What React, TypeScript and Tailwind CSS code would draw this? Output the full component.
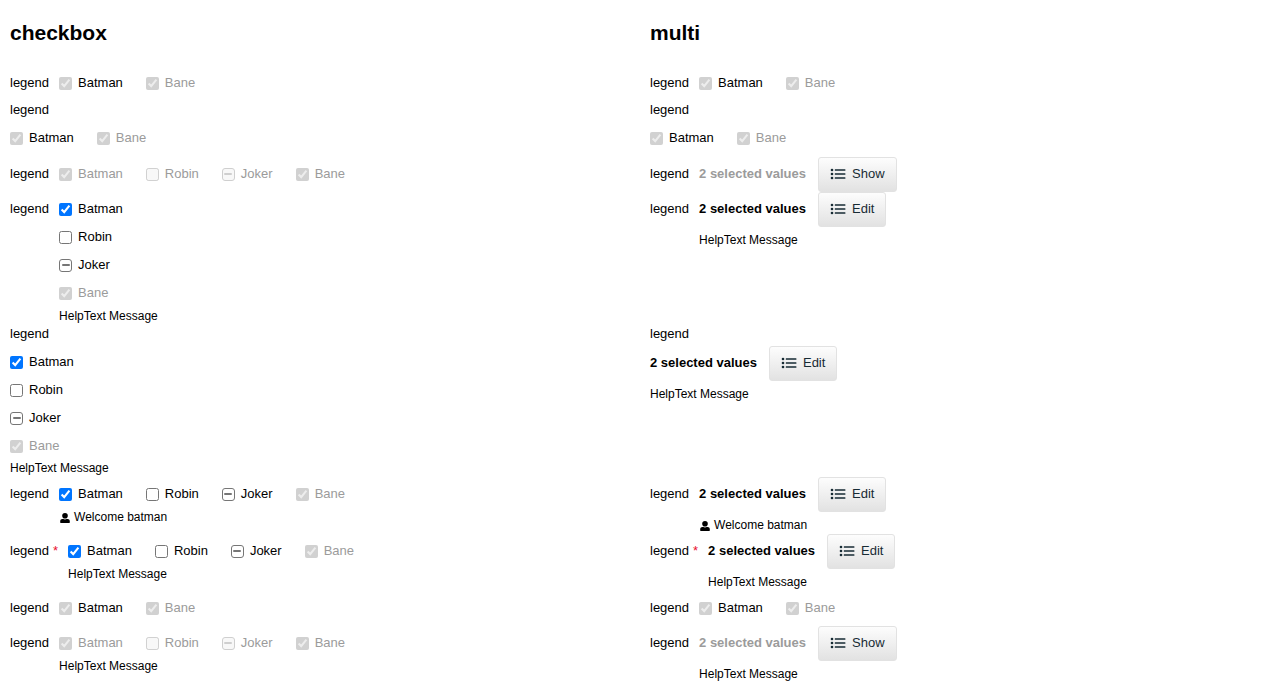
import { useEffect, useId, useRef, type ReactNode } from 'react';

type OptionState = {
  label: string;
  checked?: boolean;
  mixed?: boolean;
  disabled?: boolean;
  muted?: boolean;
};

type Field = {
  options?: OptionState[];
  summary?: 'Show' | 'Edit';
  stacked?: boolean;
  vertical?: boolean;
  required?: boolean;
  help?: 'text' | 'user';
};

const readOnlyOptions: OptionState[] = [
  { label: 'Batman', checked: true, disabled: true },
  { label: 'Bane', checked: true, disabled: true, muted: true },
];

const disabledOptions: OptionState[] = [
  { label: 'Batman', checked: true, disabled: true, muted: true },
  { label: 'Robin', disabled: true, muted: true },
  { label: 'Joker', mixed: true, disabled: true, muted: true },
  { label: 'Bane', checked: true, disabled: true, muted: true },
];

const editableOptions: OptionState[] = [
  { label: 'Batman', checked: true },
  { label: 'Robin' },
  { label: 'Joker', mixed: true },
  { label: 'Bane', checked: true, disabled: true, muted: true },
];

const rows: [Field, Field][] = [
  [{ options: readOnlyOptions }, { options: readOnlyOptions }],
  [
    { options: readOnlyOptions, stacked: true },
    { options: readOnlyOptions, stacked: true },
  ],
  [{ options: disabledOptions }, { summary: 'Show' }],
  [
    { options: editableOptions, vertical: true, help: 'text' },
    { summary: 'Edit', help: 'text' },
  ],
  [
    { options: editableOptions, vertical: true, stacked: true, help: 'text' },
    { summary: 'Edit', stacked: true, help: 'text' },
  ],
  [
    { options: editableOptions, help: 'user' },
    { summary: 'Edit', help: 'user' },
  ],
  [
    { options: editableOptions, required: true, help: 'text' },
    { summary: 'Edit', required: true, help: 'text' },
  ],
  [{ options: readOnlyOptions }, { options: readOnlyOptions }],
  [
    { options: disabledOptions, help: 'text' },
    { summary: 'Show', help: 'text' },
  ],
];

function ListIcon() {
  return (
    <svg className="size-4" viewBox="0 0 16 16" fill="currentColor" aria-hidden="true">
      <circle cx="2" cy="4" r="1.3" />
      <circle cx="2" cy="8" r="1.3" />
      <circle cx="2" cy="12" r="1.3" />
      <rect x="4.8" y="3.2" width="10.6" height="1.6" rx="0.4" />
      <rect x="4.8" y="7.2" width="10.6" height="1.6" rx="0.4" />
      <rect x="4.8" y="11.2" width="10.6" height="1.6" rx="0.4" />
    </svg>
  );
}

function UserIcon() {
  return (
    <svg className="mt-px size-3" viewBox="0 0 12 12" fill="currentColor" aria-hidden="true">
      <circle cx="6" cy="3.8" r="2.8" />
      <path d="M1.2 10.6V9.2C1.2 7.9 2.2 7 3.4 7h.9c1 .5 2.4 .5 3.4 0h.9c1.2 0 2.2.9 2.2 2.2v1.4c0 .3-.2.4-.5.4H1.7c-.3 0-.5-.1-.5-.4z" />
    </svg>
  );
}

const mixedBox =
  "grid appearance-none place-items-center rounded-[3px] border border-[#767676] bg-white before:h-0.5 before:w-2 before:rounded-full before:bg-[#767676] before:content-[''] disabled:border-[#cfcfcf] disabled:bg-[#f8f8f8] disabled:before:bg-[#cfcfcf]";

function Option({ label, checked, mixed, disabled, muted }: OptionState) {
  const ref = useRef<HTMLInputElement>(null);
  useEffect(() => {
    if (ref.current) ref.current.indeterminate = Boolean(mixed);
  }, [mixed]);
  return (
    <label className={`flex h-7 items-center gap-1.5 ${muted ? 'text-[#9b9b9b]' : ''}`}>
      <input
        ref={ref}
        type="checkbox"
        defaultChecked={checked}
        disabled={disabled}
        className={`size-[13px] ${mixed ? mixedBox : ''}`}
      />
      {label}
    </label>
  );
}

function Help({ kind }: { kind: 'text' | 'user' }) {
  return (
    <p className="flex items-center gap-[3px] pb-px text-[12px] leading-4">
      {kind === 'user' ? (
        <>
          <UserIcon />
          Welcome batman
        </>
      ) : (
        'HelpText Message'
      )}
    </p>
  );
}

function FormField({ options, summary, stacked, vertical, required, help }: Field) {
  const id = useId();
  let control: ReactNode;
  if (options) {
    control = (
      <div
        className={`flex ${vertical ? 'flex-col items-start' : 'gap-x-[23px]'} ${
          stacked ? 'pt-[5px]' : 'pt-[3px]'
        } ${help && !stacked ? 'pb-px' : ''} ${help ? '' : stacked ? 'pb-[5px]' : 'pb-1'}`}
      >
        {options.map((o) => (
          <Option key={o.label} {...o} />
        ))}
      </div>
    );
  } else {
    control = (
      <div className={`flex items-center gap-3 ${stacked ? 'pt-[3px]' : ''} ${help ? 'pb-[5px]' : ''}`}>
        <b className={`pb-px ${summary === 'Show' ? 'text-[#9b9b9b]' : ''}`}>2 selected values</b>
        <button
          type="button"
          className="flex h-[35px] items-center gap-1.5 rounded-[3px] border border-[#e2e2e2] bg-linear-to-b from-[#fdfdfd] to-[#e2e2e2] px-[11px] pb-px text-[#172b34]"
        >
          <ListIcon />
          {summary}
        </button>
      </div>
    );
  }
  return (
    <div role="group" aria-labelledby={id} className={`flex items-start ${stacked ? 'flex-col' : 'gap-2.5'}`}>
      <span id={id} className={`flex gap-1 ${stacked ? 'leading-[18px]' : 'leading-[34px]'}`}>
        legend
        {required && <span className="text-[#e8112d]">*</span>}
      </span>
      <div>
        {control}
        {help && <Help kind={help} />}
      </div>
    </div>
  );
}

export default function App() {
  return (
    <main className="bg-white px-2.5 font-['Liberation_Sans',Arial,sans-serif] text-[13px] leading-[18px] text-black">
      <div className="grid grid-cols-2 gap-x-5">
        <h1 className="py-[17px] text-[21px] leading-8 font-bold">checkbox</h1>
        <h1 className="py-[17px] text-[21px] leading-8 font-bold">multi</h1>
        {rows.flatMap((pair, r) => pair.map((field, c) => <FormField key={`${r}-${c}`} {...field} />))}
      </div>
    </main>
  );
}
